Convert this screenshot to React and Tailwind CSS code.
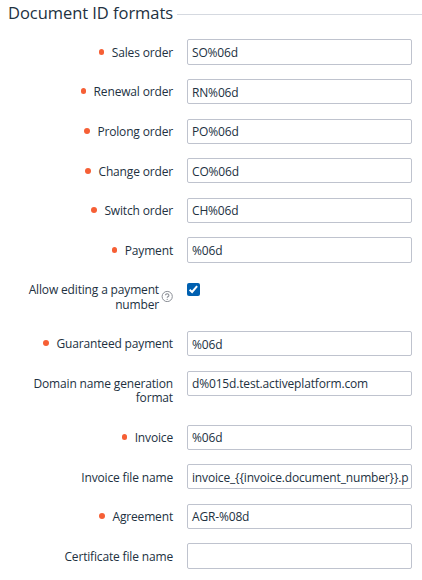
import React from "react";

const fields = [
  { label: "Sales order", value: "SO%06d", required: true, row: "h-[40px]", box: "h-[26px] pt-[5px]", pad: "pt-[6px]" },
  { label: "Renewal order", value: "RN%06d", required: true, row: "h-[40px]", box: "h-[25px] pt-[5px]" },
  { label: "Prolong order", value: "PO%06d", required: true, row: "h-[39px]" },
  { label: "Change order", value: "CO%06d", required: true, row: "h-[40px]", box: "h-[25px] pt-[5px]", pad: "pt-[6px]" },
  { label: "Switch order", value: "CH%06d", required: true, row: "h-[39px]" },
  { label: "Payment", value: "%06d", required: true, row: "h-[40px]", box: "h-[26px] pt-[5px]", pad: "pt-[6px]" },
  { label: "Allow editing a payment number", checkbox: true, row: "h-[54px]" },
  { label: "Guaranteed payment", value: "%06d", required: true, row: "h-[40px]", box: "h-[25px] pt-[5px]" },
  { label: "Domain name generation format", value: "d%015d.test.activeplatform.com", row: "h-[54px]", leading: "leading-[14px]", pad: "pt-[6px]" },
  { label: "Invoice", value: "%06d", required: true, row: "h-[39px]" },
  { label: "Invoice file name", value: "invoice_{{invoice.document_number}}.p", row: "h-[40px]", box: "h-[25px] pt-[5px]", pad: "pt-[6px]" },
  { label: "Agreement", value: "AGR-%08d", required: true, row: "h-[39px]" },
  { label: "Certificate file name", value: "", row: "h-[37px]", box: "h-[26px] pt-[5px]", pad: "pt-[6px]" },
];

function HelpIcon() {
  return (
    <svg className="mt-[8px] ml-[2px] h-[12px] w-[12px] shrink-0" viewBox="0 0 12 12" fill="none">
      <circle cx="6.2" cy="6.5" r="5.1" stroke="#8b8f96" strokeWidth="1" />
      <path d="M4.5 5.3a1.7 1.6 0 1 1 2.7 1.3c-.7.4-1 .6-1 1.2" stroke="#8b8f96" strokeWidth="1.1" />
      <circle cx="6.2" cy="9.3" r=".65" fill="#8b8f96" />
    </svg>
  );
}

function Checkbox() {
  return (
    <span className="mt-[6px] flex h-[13px] w-[13px] items-center justify-center rounded-[2px] bg-[#0060b0]">
      <svg className="h-[13px] w-[13px]" viewBox="0 0 13 13" fill="none">
        <path d="M2.6 6.8l2.5 2.2 5-5.8" stroke="#fff" strokeWidth="2" />
      </svg>
    </span>
  );
}

function Field({
  label,
  value,
  required,
  checkbox,
  row,
  box = "h-[25px] pt-[4px]",
  pad = "pt-[5px]",
  leading = "leading-[15px]",
}) {
  return (
    <div className={`flex items-start ${row}`}>
      <div className={`mr-[14px] flex w-[165px] items-start justify-end text-right ${pad} ${leading}`}>
        {required && <span className="mt-[4px] mr-[7.5px] h-[5.5px] w-[5.5px] shrink-0 rounded-full bg-[#f65f35]" />}
        <span className={checkbox ? "w-[145px]" : ""}>{label}</span>
        {checkbox && <HelpIcon />}
      </div>
      {checkbox ? (
        <Checkbox />
      ) : (
        <div className={`w-[225px] rounded-[2px] border border-[#bfc3ce] pl-[4px] leading-[15px] whitespace-nowrap ${box}`}>
          {value}
        </div>
      )}
    </div>
  );
}

export default function App() {
  return (
    <div className="h-[580px] w-[422px] overflow-hidden bg-white pl-[8px] font-['Open_Sans',sans-serif] text-[12px] tracking-[-0.16px] text-[#22313f]">
      <div className="flex h-[39px] items-start">
        <h2 className="mt-[2px] text-[16.5px] leading-[22px] tracking-[-0.05px] whitespace-nowrap">Document ID formats</h2>
        <div className="mt-[14px] ml-[4px] h-px flex-1 bg-[#d5d9e0]" />
      </div>
      {fields.map((field) => (
        <Field key={field.label} {...field} />
      ))}
    </div>
  );
}
